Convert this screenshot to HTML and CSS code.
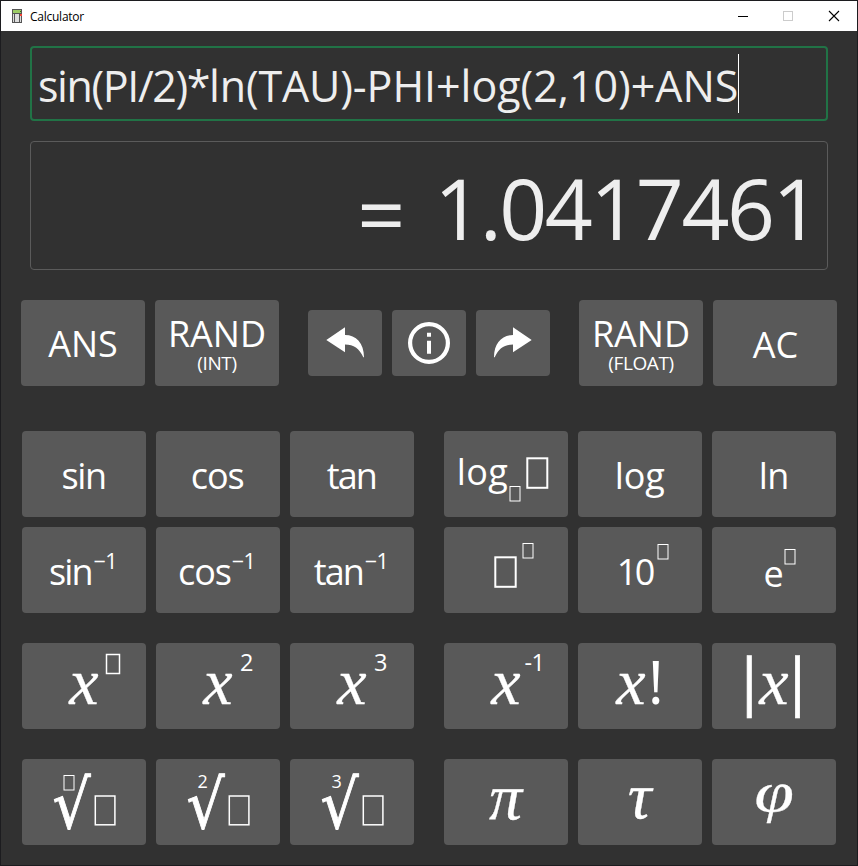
FILE: index.html
```html
<!DOCTYPE html>
<html lang="en">
<head>
<meta charset="utf-8">
<title>Calculator</title>
<link rel="stylesheet" href="styles.css">
</head>
<body>
<div class="window">
  <header class="titlebar">
    <svg class="app-icon" width="10" height="14" viewBox="0 0 10 14"><rect width="10" height="14" fill="#555"/><rect x="1" y="1" width="8" height="3" fill="#9ccc65"/><rect x="8" y="2" width="1" height="1" fill="#33691e"/><rect x="1" y="5" width="1" height="8" fill="#ddd"/><rect x="3" y="5" width="4" height="8" fill="#ddd"/><rect x="8" y="5" width="1" height="8" fill="#ddd"/><rect x="8" y="5" width="2" height="2" fill="#f44336"/></svg>
    <span class="title">Calculator</span>
    <svg class="controls" width="104" height="12" viewBox="0 0 104 12" fill="none" shape-rendering="crispEdges"><path d="M0 6.500h10" stroke="#000"/><rect x="45.500" y="1.500" width="9" height="9" stroke="#ccc"/><path d="M91 1l10 10M101 1L91 11" stroke="#000" stroke-width="1.100" shape-rendering="auto"/></svg>
  </header>
  <main class="body">
    <div class="entry"><span class="tight">sin(PI/2)*</span><span class="mid">ln(TAU)</span><span class="loose">-PHI+log(2,10)+ANS</span><span class="caret"></span></div>
    <div class="result"><span class="equals">= </span>1.0417461</div>

    <div class="row top-row">
      <div class="group">
        <button class="key ans">ANS</button>
        <button class="key stacked">RAND<small>(INT)</small></button>
      </div>
      <div class="group">
        <button class="key small"><svg viewBox="0 0 74 66"><path d="M18.300 30L37 17.300V25C48 25 56 33 56 47.300H55.300C51 38 46 34.700 37 34.500V42.300Z"/></svg></button>
        <button class="key small"><svg viewBox="0 0 74 66"><circle cx="37" cy="33" r="18.900" fill="none" stroke="#fff" stroke-width="4.200"/><path d="M35 22.700h4v4h-4zM35 30.700h4v13h-4z"/></svg></button>
        <button class="key small"><svg viewBox="0 0 74 66"><path d="M55.700 30L37 17.300V25C26 25 18 33 18 47.300H18.700C23 38 28 34.700 37 34.500V42.300Z"/></svg></button>
      </div>
      <div class="group">
        <button class="key stacked">RAND<small>(FLOAT)</small></button>
        <button class="key ac">AC</button>
      </div>
    </div>

    <div class="row">
      <div class="pad">
        <button class="key"><svg viewBox="0 0 124 86"><text class="fn" x="62.300" y="58" textLength="45.500">sin</text></svg></button>
        <button class="key"><svg viewBox="0 0 124 86"><text class="fn" x="61.700" y="58" textLength="54">cos</text></svg></button>
        <button class="key"><svg viewBox="0 0 124 86"><text class="fn" x="62.300" y="58" textLength="51">tan</text></svg></button>
        <button class="key"><svg viewBox="0 0 124 86"><text class="fn" x="49.300" y="57.500" textLength="44.500">sin</text><text class="inv" x="83.300" y="41.700">−1</text></svg></button>
        <button class="key"><svg viewBox="0 0 124 86"><text class="fn" x="49" y="57.500" textLength="54">cos</text><text class="inv" x="87.500" y="41.700">−1</text></svg></button>
        <button class="key"><svg viewBox="0 0 124 86"><text class="fn" x="49.300" y="57.500" textLength="51">tan</text><text class="inv" x="86.500" y="41.700">−1</text></svg></button>
      </div>
      <div class="pad">
        <button class="key"><svg viewBox="0 0 124 86"><text class="fn" x="38.300" y="53.500" textLength="51">log</text><rect class="box thin" x="66" y="55.500" width="10" height="14.500"/><rect class="box" x="83.300" y="27.300" width="20" height="29.500"/></svg></button>
        <button class="key"><svg viewBox="0 0 124 86"><text class="fn" x="61.700" y="58" textLength="50">log</text></svg></button>
        <button class="key"><svg viewBox="0 0 124 86"><text class="fn" x="62" y="58" textLength="30.500">ln</text></svg></button>
        <button class="key"><svg viewBox="0 0 124 86"><rect class="box" x="51.300" y="30.300" width="20.400" height="29.500"/><rect class="box thin" x="79" y="16.500" width="10" height="14.500"/></svg></button>
        <button class="key"><svg viewBox="0 0 124 86"><text class="fn" x="58" y="58" textLength="38.500">10</text><rect class="box thin" x="80" y="17.500" width="10" height="14.500"/></svg></button>
        <button class="key"><svg viewBox="0 0 124 86"><text class="fn" x="61.500" y="60">e</text><rect class="box thin" x="73" y="22.500" width="10" height="14.500"/></svg></button>
      </div>
    </div>

    <div class="row">
      <div class="pad">
        <button class="key"><svg viewBox="0 0 124 86"><text class="var" x="62" y="60.700">x</text><rect class="box medium" x="84.500" y="11.500" width="13" height="19"/></svg></button>
        <button class="key"><svg viewBox="0 0 124 86"><text class="var" x="62" y="60.700">x</text><text class="sup" x="90.500" y="28">2</text></svg></button>
        <button class="key"><svg viewBox="0 0 124 86"><text class="var" x="62" y="60.700">x</text><text class="sup" x="90.500" y="28">3</text></svg></button>
      </div>
      <div class="pad">
        <button class="key"><svg viewBox="0 0 124 86"><text class="var" x="62" y="60.700">x</text><text class="sup" x="90.500" y="28">-1</text></svg></button>
        <button class="key"><svg viewBox="0 0 124 86"><text class="var" x="53" y="60.700">x</text><text class="bang" x="77.700" y="60.500">!</text></svg></button>
        <button class="key"><svg viewBox="0 0 124 86"><text class="bar" x="37.300" y="60">|</text><text class="var" x="62" y="60.700">x</text><text class="bar" x="85.500" y="60">|</text></svg></button>
      </div>
    </div>

    <div class="row">
      <div class="pad">
        <button class="key"><svg viewBox="0 0 124 86"><text class="root" transform="translate(49.500 68.500) scale(1 1.120)">√</text><rect class="box thin" x="42" y="16.500" width="10" height="14.500"/><rect class="box medium" x="73.300" y="37" width="19.600" height="28.800"/></svg></button>
        <button class="key"><svg viewBox="0 0 124 86"><text class="root" transform="translate(49.500 68.500) scale(1 1.120)">√</text><text class="index" x="46.700" y="29">2</text><rect class="box medium" x="73.300" y="37" width="19.600" height="28.800"/></svg></button>
        <button class="key"><svg viewBox="0 0 124 86"><text class="root" transform="translate(49.500 68.500) scale(1 1.120)">√</text><text class="index" x="46.700" y="29">3</text><rect class="box medium" x="73.300" y="37" width="19.600" height="28.800"/></svg></button>
      </div>
      <div class="pad">
        <button class="key"><svg viewBox="0 0 124 86"><text class="var" x="61.500" y="59.700">π</text></svg></button>
        <button class="key"><svg viewBox="0 0 124 86"><text class="var" x="61.500" y="59">τ</text></svg></button>
        <button class="key"><svg viewBox="0 0 124 86"><text class="var" transform="translate(62.300 51.500) scale(1.080 .880)">φ</text></svg></button>
      </div>
    </div>
  </main>
</div>
</body>
</html>
```
FILE: styles.css
```css
* { box-sizing: border-box; }
body { margin: 0; font-family: "Open Sans", "Noto Sans", sans-serif; }
.window { width: 858px; height: 866px; border: 1px solid #1c1c1f; background: #313131; overflow: hidden; }
.titlebar { height: 30px; display: flex; align-items: center; padding: 0 15px 0 11px; background: #fff; color: #000; }
.app-icon { margin-right: 8px; }
.title { flex: 1; font-size: 12px; letter-spacing: -0.25px; }
.body { padding: 15px 20px 0; }
.entry, .result { display: flex; align-items: center; margin: 0 9px; border-radius: 4px; color: #eee; white-space: pre; }
.entry { height: 75px; padding-left: 6px; border: 2px solid #217346; font-size: 43px; }
.entry span:not(.caret) { padding-top: 3px; }
.tight { letter-spacing: -1.400px; }
.mid { letter-spacing: -0.150px; }
.loose { letter-spacing: -0.030px; }
.caret { width: 1px; height: 59px; background: #fff; }
.result { height: 129px; margin-top: 20px; padding: 4px 9px 0 0; justify-content: flex-end; border: 1px solid #5b5b5b; font-size: 84px; letter-spacing: -2.500px; word-spacing: 12px; }
.equals { padding-top: 12px; }
.row { display: flex; gap: 30px; margin: 30px 1px 0; }
.top-row { justify-content: space-between; align-items: center; gap: 0; margin: 30px 0 45px; }
.row.top-row + .row { margin-top: 0; }
.group { display: flex; gap: 10px; }
.pad { display: grid; grid-template-columns: repeat(3, 124px); gap: 10px; }
.key { display: flex; align-items: center; justify-content: center; width: 124px; height: 86px; padding: 0; border: 0; border-radius: 4px; background: #595959; color: #fff; font: 36px "Open Sans", "Noto Sans", sans-serif; }
.ans { padding-top: 1px; }
.ac { padding: 3px 0 0 1px; }
.small { width: 74px; height: 66px; }
.stacked { flex-direction: column; line-height: 36px; padding-top: 4px; }
.stacked small { font-size: 19px; line-height: 22px; letter-spacing: -0.400px; }
.key svg { display: block; width: 100%; height: 100%; fill: #fff; overflow: visible; }
.key text { text-anchor: middle; }
.fn { font-size: 36px; }
.inv { font-size: 21.500px; letter-spacing: -0.600px; }
.sup { font-size: 23.500px; letter-spacing: -0.500px; }
.index { font-size: 18px; }
.var { font: italic 66px "Liberation Serif", serif; stroke: #fff; stroke-width: 0.300px; }
.bang { font-size: 61px; }
.bar { font-size: 62px; stroke: #fff; stroke-width: 0.700px; }
.root { font: 60px "DejaVu Sans", sans-serif; stroke: #fff; stroke-width: 0.800px; }
.box { fill: none; stroke: #fff; stroke-width: 2px; }
.box.medium { stroke-width: 1.500px; }
.box.thin { stroke-width: 1px; }
```
